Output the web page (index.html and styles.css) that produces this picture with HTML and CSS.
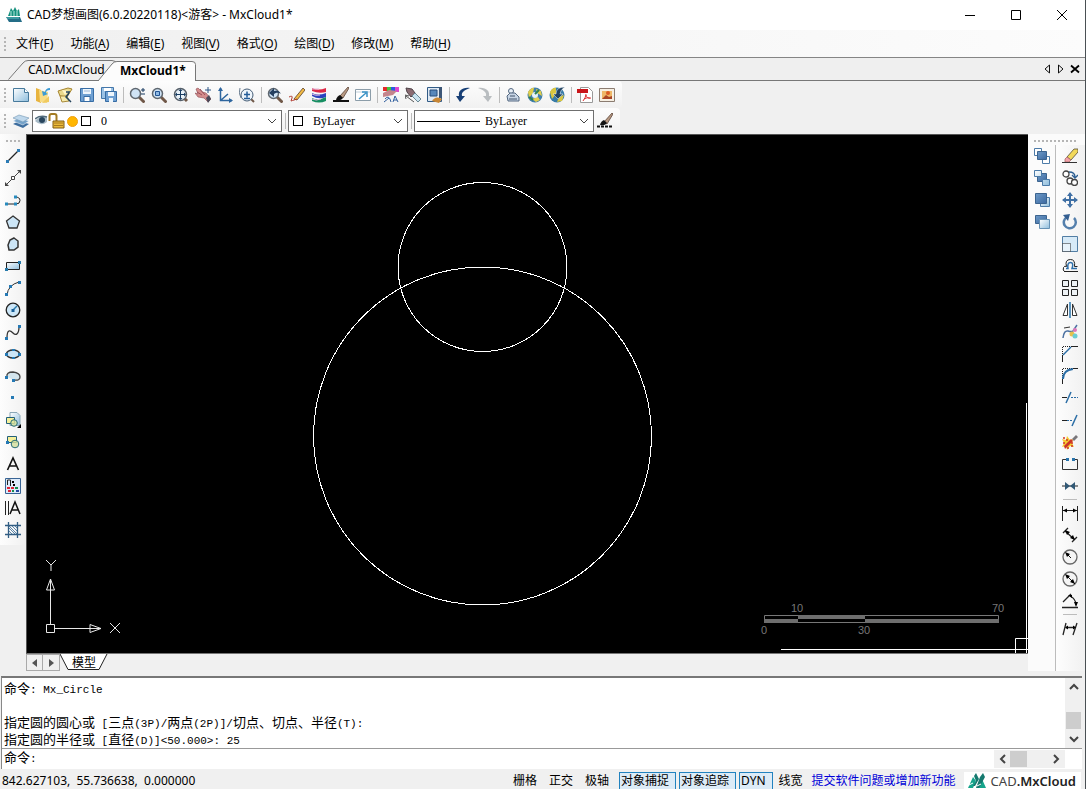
FILE: index.html
```html
<!DOCTYPE html>
<html lang="zh-CN">
<head>
<meta charset="utf-8">
<title>CAD梦想画图</title>
<link rel="stylesheet" href="styles.css">
</head>
<body>
<svg class="defs" aria-hidden="true">
<defs>
<linearGradient id="paper" x1="0" y1="0" x2="1" y2="1"><stop offset="0" stop-color="#fff"/><stop offset="1" stop-color="#8fbedd"/></linearGradient>
<linearGradient id="steel" x1="0" y1="0" x2="1" y2="1"><stop offset="0" stop-color="#6f9bc8"/><stop offset="1" stop-color="#3b68a0"/></linearGradient>
<symbol id="lens" viewBox="0 0 16 16"><path d="M10.5 10.5l4 4" stroke="#705848" stroke-width="3" stroke-linecap="round"/><circle cx="6.500" cy="6.500" r="5" fill="#cfe3f5" stroke="#5f676f" stroke-width="1.500"/></symbol>
<symbol id="logo" viewBox="0 0 18 15"><path d="M0 15L5 4l3 4-3 7zM9 15l5-9 4 9h-5z" fill="#16a58c"/><path d="M6 3l2-3 3 6-4 7H5l3-5zM12 4l3-4 2 4-6 11H8z" fill="#15796f"/><path d="M1 12l4-2M9 13l4-2" stroke="#fff"/></symbol>
</defs>
</svg>

<header class="titlebar">
  <svg class="app-icon" viewBox="0 0 16 16"><path d="M2 9L5 1l2 3 2-4 2 4 2-2 1 7z" fill="#16917e"/><path d="M5 4v5M8 4v5M11 4v5" stroke="#b5e8dc"/><path d="M0 10h14l2 5H3z" fill="#246d87"/><path d="M1 11h12" stroke="#56c9ba"/></svg>
  <h1>CAD梦想画图(6.0.20220118)&lt;游客&gt; - MxCloud1*</h1>
  <div class="window-buttons">
    <button aria-label="最小化"><svg viewBox="0 0 12 12"><path d="M1 6.500h10" stroke="#000" fill="none"/></svg></button>
    <button aria-label="最大化"><svg viewBox="0 0 12 12"><path d="M1.500 1.500h9v9h-9z" stroke="#000" fill="none"/></svg></button>
    <button aria-label="关闭"><svg viewBox="0 0 12 12"><path d="M1 1l10 10M11 1L1 11" stroke="#000" fill="none"/></svg></button>
  </div>
</header>

<nav class="menubar">
  <i class="grip"></i>
  <button>文件(<u>F</u>)</button><button>功能(<u>A</u>)</button><button>编辑(<u>E</u>)</button><button>视图(<u>V</u>)</button><button>格式(<u>O</u>)</button><button>绘图(<u>D</u>)</button><button>修改(<u>M</u>)</button><button>帮助(<u>H</u>)</button>
</nav>

<div class="tabs">
  <button class="tab"><svg class="tab-shape" viewBox="0 0 112 20"><path d="M.5 19.500L15 3q2-2.500 5-2.500h84q4 0 6 4V19.500" fill="#efefef" stroke="#777"/></svg><span>CAD.MxCloud</span></button>
  <button class="tab active"><svg class="tab-shape" viewBox="0 0 98 20"><path d="M0 20L14 3q2-2.500 5-2.500h75q3.500 0 3.500 3V20" fill="#fcfcfc" stroke="#777"/></svg><span>MxCloud1*</span></button>
  <div class="tab-nav">
    <button aria-label="上一个"><svg viewBox="0 0 10 10"><path d="M7.500 1v8L3 5z" fill="none" stroke="#111"/></svg></button>
    <button aria-label="下一个"><svg viewBox="0 0 10 10"><path d="M2.500 1v8L7 5z" fill="none" stroke="#111"/></svg></button>
    <button aria-label="关闭图纸"><svg viewBox="0 0 10 10"><path d="M1 1.500l8 7M9 1.500l-8 7" stroke="#000" stroke-width="1.800"/></svg></button>
  </div>
</div>

<div class="toolrows">
<div class="toolbar">
  <i class="grip"></i>
  <button aria-label="新建"><svg viewBox="0 0 16 16"><path d="M.5 1.500h11l4 4v9H.5z" fill="url(#paper)" stroke="#477a9c"/><path d="M11.500 1.500v4h4" fill="#fff" stroke="#477a9c"/></svg></button>
  <button aria-label="打开"><svg viewBox="0 0 16 16"><path d="M1 1l5 2v13l-5-2z" fill="#e8b43f"/><path d="M4 3l9 2-1 11-7-1z" fill="#f8dc84"/><path d="M7 16l7-7v6z" fill="#f0ca60"/><path d="M15 1c-3 0-5 2-5 4L7 4l1 5 5-2-2-1c0-2 1-3 4-3z" fill="#3c9bd5"/></svg></button>
  <button aria-label="打开网络图纸"><svg viewBox="0 0 16 16"><path d="M1 4l10-3 4 1-5 8-7-1z" fill="#ead98c" stroke="#a58430"/><path d="M3 9l2 6 7-1-2-5z" fill="#f6ebad" stroke="#a98a3a"/><path d="M5 3l7 1-4 4z" fill="#fff6c8"/><path d="M9 5h4M12 6l-3 4 5 5" stroke="#25445d" stroke-width="1.500" fill="none"/></svg></button>
  <button aria-label="保存"><svg viewBox="0 0 16 16"><path d="M1.500 1.500h13v13h-13z" fill="#6fa0d2" stroke="#376da5"/><path d="M4 2h8v5H4z" fill="#eef6fc"/><path d="M5 9.500h6v5H5z" fill="#fff" stroke="#376da5"/><path d="M5 4h6" stroke="#9ebada"/></svg></button>
  <button aria-label="另存为"><svg viewBox="0 0 16 16"><path d="M.5.5h12v11H.5z" fill="#9bc2e5" stroke="#4477aa"/><path d="M3 1h7v3H3z" fill="#fff"/><path d="M4.500 4.500h11v10h-11z" fill="#6fa0d2" stroke="#376da5"/><path d="M7 5h6v4H7zM8 11h4v4H8z" fill="#eef6fc"/></svg></button>
  <i class="sep"></i>
  <button aria-label="实时缩放"><svg viewBox="0 0 16 16"><use href="#lens"/><path d="M12 3h4M14 1v4M12 7h4" stroke="#17395e"/></svg></button>
  <button aria-label="窗口缩放"><svg viewBox="0 0 16 16"><use href="#lens"/><path d="M4.500 4.500h4v4h-4z" fill="#8eb8e2" stroke="#205495"/></svg></button>
  <button aria-label="全部缩放"><svg viewBox="0 0 16 16"><path d="M11 11l3 3" stroke="#705848" stroke-width="3"/><circle cx="7.500" cy="7.500" r="6" fill="#e8f1f8" stroke="#56606a" stroke-width="1.500"/><path d="M3 7.500h9M7.500 3v9" stroke="#183d63"/><path d="M7.500 2l2 2h-4zM7.500 13l2-2h-4zM2 7.500l2-2v4zM13 7.500l-2-2v4z" fill="#183d63"/></svg></button>
  <button aria-label="平移"><svg viewBox="0 0 16 16"><path d="M1 2l2-1 4 4 4 1 5 6-3 3-4-4-6-1-3-4 3 1z" fill="#d48c8c" stroke="#8b4a50" stroke-width=".6"/><path d="M2 5l5 3M5 2l5 6" stroke="#9a4e58"/><path d="M11 11l3-3 2 4-3 4z" fill="#4a4858"/><path d="M10 3h6M13 0v6" stroke="#2c5586"/></svg></button>
  <button aria-label="坐标系"><svg viewBox="0 0 16 16"><path d="M3.500 1v12.500H15M3.500 13.500L11 7" fill="none" stroke="#2d659e" stroke-width="1.500"/><path d="M3.500 0L1 4h5zM16 13.500l-4-2.500v5z" fill="#2d659e"/></svg></button>
  <button aria-label="范围缩放"><svg viewBox="0 0 16 16"><path d="M1 1q-2 5 1 10" stroke="#6d7f92" fill="none"/><path d="M12 12l3 3" stroke="#705848" stroke-width="2"/><circle cx="8" cy="8" r="6" fill="#eef5fb" stroke="#455d76"/><path d="M5 7.500h6M8 4.500v6M5 11.500h6" stroke="#245d99" stroke-width="1.500"/></svg></button>
  <i class="sep"></i>
  <button aria-label="上一视图"><svg viewBox="0 0 16 16"><use href="#lens"/><path d="M2 6l5-5v3c3-1 6 0 7 3-3-2-5-1-7 0v3z" fill="#243f60"/></svg></button>
  <button aria-label="铅笔"><svg viewBox="0 0 16 16"><path d="M5 12L14 1l2 2L8 13z" fill="#f1ba45" stroke="#59402a" stroke-width=".8"/><path d="M0 10q4-2 3 1t-1 3 6-2" stroke="#b0392e" fill="none"/></svg></button>
  <button aria-label="图层颜色"><svg viewBox="0 0 16 16"><path d="M1 1q6 3 14 0v4q-7 2-14-1z" fill="#dd2745"/><path d="M1 6q6 3 14 0v4q-7 3-14-1z" fill="#2a42be"/><path d="M1 11q6 3 14-1v4q-7 3-14 0z" fill="#168f62"/><path d="M1 2h7M1 7q3 2 8 1M1 12q4 2 9 0" stroke="#e5b9dc" fill="none"/></svg></button>
  <button aria-label="画笔"><svg viewBox="0 0 16 16"><path d="M7 9l8-9 1 1-6 10z" fill="#b89982" stroke="#5b4438" stroke-width=".8"/><path d="M3 13q1-4 4-5l3 3q-2 3-7 2z" fill="#111"/><path d="M0 14h16" stroke="#111" stroke-width="2"/></svg></button>
  <button aria-label="链接"><svg viewBox="0 0 16 16"><path d="M.5 2.500h15v11H.5z" fill="#fff" stroke="#8c9da9"/><path d="M1 5h14" stroke="#c2d1dc"/><path d="M4 12l7-6M7 5h5v5" stroke="#3b93c6" stroke-width="1.500" fill="none"/></svg></button>
  <i class="sep"></i>
  <button aria-label="特性"><svg viewBox="0 0 16 16"><path d="M0 0h4v4H0z" fill="#e32929"/><path d="M4 0h4v4H4z" fill="#42c53c"/><path d="M8 0h4v4H8z" fill="#2a5be0"/><path d="M12 0h4v5h-4z" fill="#dd47cd"/><path d="M0 6l6-3 8 1-4 4-10 2z" fill="#c4858c"/><path d="M10 15l2-6 3 6M11 13h3M1 15l5-4M2 12q4-5 6 3" stroke="#315f9e" fill="none"/></svg></button>
  <button aria-label="特性匹配"><svg viewBox="0 0 16 16"><path d="M1 1l6 1 3 4-4 4-4-5z" fill="#8a6b72" stroke="#4e4248"/><path d="M7 9l3-3 6 6-3 3z" fill="#c9e2ef" stroke="#698793"/><path d="M1 9l8 6M0 8l1 4M0 8l4 1" stroke="#555"/></svg></button>
  <button aria-label="图块编辑"><svg viewBox="0 0 16 16"><path d="M.5.5h14v14H.5z" fill="#dfe9f3" stroke="#315b86"/><path d="M3 3h7v6H3z" fill="#5687bb" stroke="#244c7c"/><path d="M12 0h3v11h-3z" fill="#3c5676"/><path d="M5 14q3-5 8-3l2 1-3 4z" fill="#c88736"/></svg></button>
  <i class="sep"></i>
  <button aria-label="撤销"><svg viewBox="0 0 16 16"><path d="M15 1C7 0 3 4 4 9H1l4 6 5-6H7c-1-4 3-6 8-8z" fill="#173f76"/></svg></button>
  <button aria-label="重做"><svg viewBox="0 0 16 16"><path d="M1 1c8-1 12 3 11 8h3l-4 6-5-6h3c1-4-3-6-8-8z" fill="#b9bdc0"/></svg></button>
  <i class="sep"></i>
  <button aria-label="打印"><svg viewBox="0 0 16 16"><circle cx="6" cy="4" r="2.500" fill="#e9f0f8" stroke="#536780"/><path d="M2 9l3-3h5l4 4v4H3z" fill="#c8d5e5" stroke="#536780"/><path d="M4 12h8M5 9h5" stroke="#40536b"/></svg></button>
  <button aria-label="网络"><svg viewBox="0 0 16 16"><circle cx="8" cy="8" r="7.500" fill="#417fac"/><path d="M1 5q4-5 6-4l-1 5-4 5zM9 2l5 2 1 5-5-3zM5 12l6-2 2 3-4 2z" fill="#e2ce4b"/><circle cx="8" cy="8" r="3" fill="#e6f2f8"/><path d="M2 10l4 3M12 3l-4 4" stroke="#2e8050" stroke-width="2"/></svg></button>
  <button aria-label="同步"><svg viewBox="0 0 16 16"><circle cx="8" cy="8" r="7.500" fill="#387ba7"/><path d="M1 5q3-5 6-4v6l-4 5zM10 10l5-2-2 6-5 1z" fill="#dac63e"/><path d="M16 0q-9 0-9 7H4l5 5 5-5h-3q0-4 5-7z" fill="#234362" stroke="#f4f8fb" stroke-width=".5"/></svg></button>
  <i class="sep"></i>
  <button aria-label="输出PDF"><svg viewBox="0 0 16 16"><path d="M3.500.500h8l4 4v11h-12z" fill="#fff" stroke="#999"/><path d="M0 2h11v4H0z" fill="#c91519"/><path d="M6 14q3-4 3-7M9 8q1 4 5 3M7 12q3-2 6-1" fill="none" stroke="#d33"/></svg></button>
  <button aria-label="输出图片"><svg viewBox="0 0 16 16"><path d="M.5 1.500h15v13H.5z" fill="#f6efe3" stroke="#8b7c71"/><path d="M3 4h10v8H3z" fill="#efb767"/><path d="M3 12l4-4 3 2 3-1v3z" fill="#a94424"/><circle cx="9" cy="6" r="2" fill="#d95a25"/></svg></button>
</div>
<div class="toolbar second">
  <i class="grip"></i>
  <button aria-label="图层管理"><svg viewBox="0 0 16 16"><path d="M0 11l6-3 10 3-6 4z" fill="#3d6d9e"/><path d="M0 8l6-3 10 3-6 4z" fill="#75a3ca" stroke="#fff" stroke-width=".5"/><path d="M0 5l6-3 10 3-6 4z" fill="#bfd8ec" stroke="#7195b4" stroke-width=".6"/></svg></button>
  <div class="combo layer">
    <svg class="wide" viewBox="0 0 44 16"><path d="M0 8q5-6 12-4v5q-6 5-12-1z" fill="#a8bbc7"/><circle cx="7" cy="7" r="3" fill="#29465e"/><path d="M0 6q5-4 12-2" stroke="#526b7c" fill="none" stroke-width="1.500"/><path d="M14.500 8V3q0-2 2-2h3q2 0 2 2v5" fill="none" stroke="#a37b23" stroke-width="2"/><path d="M18 8h11v7H18z" fill="#e9ba3b" stroke="#815c12"/><path d="M19 10h9M19 12.500h9" stroke="#a77920"/><circle cx="37.500" cy="8.500" r="5" fill="#ffb600" stroke="#f0a010"/></svg>
    <i class="swatch"></i>
    <select aria-label="图层"><option>0</option></select>
    <svg class="chev" viewBox="0 0 10 6"><path d="M1 1l4 4 4-4" fill="none" stroke="#444"/></svg>
  </div>
  <i class="sep"></i>
  <div class="combo color">
    <i class="swatch"></i>
    <select aria-label="颜色"><option>ByLayer</option></select>
    <svg class="chev" viewBox="0 0 10 6"><path d="M1 1l4 4 4-4" fill="none" stroke="#444"/></svg>
  </div>
  <i class="sep"></i>
  <div class="combo linetype">
    <i class="linesample"></i>
    <select aria-label="线型"><option>ByLayer</option></select>
    <svg class="chev" viewBox="0 0 10 6"><path d="M1 1l4 4 4-4" fill="none" stroke="#444"/></svg>
  </div>
  <button aria-label="线型管理"><svg viewBox="0 0 16 16"><path d="M7 9l8-9 1 1-6 10z" fill="#b89982" stroke="#5b4438" stroke-width=".8"/><path d="M3 12q1-4 4-5l3 3q-2 3-7 2z" fill="#111"/><path d="M0 13.500h16" stroke="#111" stroke-width="2" stroke-dasharray="3 1"/></svg></button>
</div>
</div>

<main class="work">
<div class="side-left">
<div class="toolbar vertical draw">
  <i class="grip"></i>
  <button aria-label="直线"><svg viewBox="0 0 16 16"><path d="M2 14L14 2" stroke="#222" stroke-width="1.300"/><path d="M1 12h3v3H1zM12 1h3v3h-3z" fill="#2a7bb5"/></svg></button>
  <button aria-label="构造线"><svg viewBox="0 0 16 16"><path d="M1 15L15 1" stroke="#444"/><path d="M0 12v4h4zM12 0h4v4z" fill="#444"/><path d="M6.500 6.500h3v3h-3z" fill="#fff" stroke="#444"/></svg></button>
  <button aria-label="多段线"><svg viewBox="0 0 16 16"><path d="M1 12h10M10 5q5 0 5 3.500T11 12" fill="none" stroke="#222"/><path d="M0 10.500h3v3H0zM9 10.500h3v3H9zM9 3.500h3v3H9z" fill="#278abd"/></svg></button>
  <button aria-label="正多边形"><svg viewBox="0 0 16 16"><path d="M8 2l6.500 5-2.500 7H4L1.500 7z" fill="#cce5f6" stroke="#333" stroke-width="1.300"/></svg></button>
  <button aria-label="多边形"><svg viewBox="0 0 16 16"><path d="M9 2l4 3v6l-4 3H4L3 9l2-5z" fill="#cce5f6" stroke="#333" stroke-width="1.500"/></svg></button>
  <button aria-label="矩形"><svg viewBox="0 0 16 16"><path d="M1.500 4.500h13v7h-13z" fill="url(#paper)" stroke="#222"/><path d="M0 10h3v3H0zM13 3h3v3h-3z" fill="#287bac"/></svg></button>
  <button aria-label="圆弧"><svg viewBox="0 0 16 16"><path d="M2 15Q3 5 14 2" fill="none" stroke="#333"/><path d="M0 13h3v3H0zM4 5h3v3H4zM13 1h3v3h-3z" fill="#2579b4"/></svg></button>
  <button aria-label="圆"><svg viewBox="0 0 16 16"><circle cx="8" cy="8" r="6.800" fill="#cce6f7" stroke="#222" stroke-width="1.300"/><path d="M8 8l4-4" stroke="#287bac" stroke-width="1.500"/><path d="M6.500 7h3v3h-3z" fill="#175f99"/></svg></button>
  <button aria-label="样条曲线"><svg viewBox="0 0 16 16"><path d="M2 14C2 5 5 6 8 9s6 1 6-6" fill="none" stroke="#333" stroke-width="1.300"/><path d="M0 13h3v3H0zM13 1h3v3h-3z" fill="#2579b4"/></svg></button>
  <button aria-label="椭圆"><svg viewBox="0 0 16 16"><ellipse cx="8" cy="8" rx="6.500" ry="4" fill="#cce6f7" stroke="#333" stroke-width="1.500"/><path d="M0 7h3v3H0zM13 7h3v3h-3zM7 3h3v2H7zM7 11h3v2H7z" fill="#2579b4"/></svg></button>
  <button aria-label="椭圆弧"><svg viewBox="0 0 16 16"><path d="M2 9q-1-5 6-5 7 1 7 5t-6 3" fill="#d4e5ed" stroke="#444" stroke-width="1.300"/><path d="M0 8h3v3H0zM7 11h3v3H7z" fill="#2579b4"/></svg></button>
  <button aria-label="点"><svg viewBox="0 0 16 16"><path d="M6 6h3v3H6z" fill="#2579b4"/></svg></button>
  <button aria-label="插入块"><svg viewBox="0 0 16 16"><path d="M5 .5h7l3 3v10H5z" fill="url(#paper)" stroke="#8aa7b6"/><path d="M1.500 5.500h8v6h-8z" fill="#f6f09a" stroke="#236079"/><circle cx="9" cy="11" r="3.300" fill="#dbe59d" fill-opacity=".8" stroke="#286d78"/><path d="M12 16h4v-4z"/></svg></button>
  <button aria-label="创建块"><svg viewBox="0 0 16 16"><path d="M2.500 2.500h9v6h-9z" fill="#f6f09a" stroke="#236079"/><circle cx="10" cy="10" r="3.800" fill="#d5e09c" fill-opacity=".8" stroke="#286d78"/><path d="M1 7h3v3H1z" fill="#2579b4"/></svg></button>
  <button aria-label="文字"><svg viewBox="0 0 16 16"><path d="M2.500 14L8 2l5.500 12M4.500 10h7" fill="none" stroke="#111" stroke-width="1.600"/></svg></button>
  <button aria-label="填充"><svg viewBox="0 0 16 16"><path d="M.5.5h15v15H.5z" fill="#deebfa" stroke="#386495"/><path d="M2.500 7V2h3v6" fill="none" stroke="#222"/><path d="M7 3h2v2H7zM8 6h2v2H8z"/><path d="M2 9h3v2H2zM6 9h3v2H6zM3 12h3v2H3z" fill="#dd2438"/><path d="M10 9h3v2h-3zM7 12h2v2H7z" fill="#138d4e"/><path d="M11 12h3v2h-3z" fill="#24469e"/></svg></button>
  <button aria-label="单行文字"><svg viewBox="0 0 16 16"><path d="M.5 1v14M3.500 1v14" stroke="#222"/><path d="M5 14l5-12 5 12M7 10h6" fill="none" stroke="#111" stroke-width="1.500"/></svg></button>
  <button aria-label="图案填充"><svg viewBox="0 0 16 16"><path d="M3.500 0v16M12.500 0v16M0 3.500h16M0 12.500h16" stroke="#315d83" stroke-width="1.300"/><path d="M4 9l3 3M4 6l6 6M4 4l8 8M7 4l5 5M10 4l2 2" stroke="#386b96" stroke-width=".8"/></svg></button>
</div>
</div>

<section class="center">
  <div class="canvas">
    <svg class="drawing"><g fill="none" stroke="#fff" shape-rendering="crispEdges"><circle cx="455.500" cy="132" r="84.500"/><circle cx="455.500" cy="301" r="169"/></g></svg>
    <svg class="ucs" viewBox="0 0 80 80"><g fill="none" stroke="#e8e8e8"><path d="M5.500 68.500h8v8h-8zM9.500 68V32M14 72.500h35"/><path d="M9.500 23l-4 11h8zM9.500 23v11M60 72.500l-11-4v8zM60 72.500H49"/><path d="M5 4l5 5 5-5M10 9v6M69 67l10 10M79 67l-10 10"/></g></svg>
    <svg class="scale" viewBox="0 0 250 36"><g fill="none" stroke="#777"><path d="M7.500 12.500h234v7h-234z"/></g><path d="M7 16h34v4H7zM41 12h67v4H41zM108 16h134v4H108z" fill="#6e6e6e"/><g class="scale-text"><text x="40" y="9">10</text><text x="241" y="9">70</text><text x="7" y="31">0</text><text x="107" y="31">30</text></g></svg>
    <svg class="cursor" viewBox="0 0 248 250"><g fill="none" stroke="#fff"><path d="M246.500 0v250M1 246.500h247M235.500 250v-14.500h12.500"/></g></svg>
  </div>
  <div class="model-tabs">
    <button class="arrow" aria-label="左移"><svg viewBox="0 0 10 10"><path d="M7 1v8L2 5z" fill="#555"/></svg></button>
    <button class="arrow" aria-label="右移"><svg viewBox="0 0 10 10"><path d="M3 1v8l5-4z" fill="#555"/></svg></button>
    <button class="model"><svg viewBox="0 0 48 16"><path d="M0 0l8 15.500h31L47 0z" fill="#fff"/><path d="M0 0l8 15.500h31L47 0" fill="none" stroke="#222"/></svg><span>模型</span></button>
  </div>
</section>

<aside class="side-right">
<i class="grip"></i>
<div class="side-cols">
<div class="toolbar vertical order">
  <button aria-label="前置"><svg viewBox="0 0 16 16"><path d="M.5.5h7v7h-7z" fill="#fff" stroke="#4c7ba8"/><path d="M8.500 8.500h7v7h-7z" fill="#fff" stroke="#4c7ba8"/><path d="M3.500 3.500h9v8h-9z" fill="url(#steel)" stroke="#3c648f"/></svg></button>
  <button aria-label="后置"><svg viewBox="0 0 16 16"><path d="M3.500 3.500h9v8h-9z" fill="url(#steel)" stroke="#3c648f"/><path d="M.5.5h7v6h-7zM8.500 9.500h7v6h-7z" fill="url(#paper)" stroke="#4c7ba8"/></svg></button>
  <button aria-label="置于对象之上"><svg viewBox="0 0 16 16"><path d="M6.500 5.500h9v9h-9z" fill="url(#paper)" stroke="#4c7ba8"/><path d="M1.500 1.500h11v10h-11z" fill="url(#steel)" stroke="#3c648f"/></svg></button>
  <button aria-label="置于对象之下"><svg viewBox="0 0 16 16"><path d="M1.500 1.500h11v8h-11z" fill="url(#steel)" stroke="#3c648f"/><path d="M5.500 5.500h10v9h-10z" fill="url(#paper)" stroke="#6792b5"/></svg></button>
</div>
<div class="toolbar vertical modify">
  <button aria-label="删除"><svg viewBox="0 0 16 16"><path d="M5 9l7-8h4v3l-7 8z" fill="#f2d95b" stroke="#544b35" stroke-width=".8"/><path d="M3 11l2-2 4 3-2 2H3z" fill="#f3a2aa" stroke="#a96b69" stroke-width=".8"/><path d="M0 14.500h15" stroke="#333"/></svg></button>
  <button aria-label="复制"><svg viewBox="0 0 16 16"><g fill="#fff" stroke="#444" stroke-width="1.300"><circle cx="4" cy="4" r="3"/><circle cx="8" cy="11" r="3"/><circle cx="12.500" cy="12.500" r="3"/></g><path d="M7 2q6 0 6 5M10 5l3 3 3-3" fill="none" stroke="#2d5f92" stroke-width="1.300"/></svg></button>
  <button aria-label="移动"><svg viewBox="0 0 16 16"><path d="M8 1v14M1 8h14" stroke="#3f6fa4" stroke-width="2"/><path d="M8 0l3 4H5zM8 16l3-4H5zM0 8l4-3v6zM16 8l-4-3v6z" fill="#3f6fa4"/></svg></button>
  <button aria-label="旋转"><svg viewBox="0 0 16 16"><path d="M5 3a6 6 0 1 0 7 1" fill="none" stroke="#547fac" stroke-width="2.500"/><path d="M1 1l7-1-2 7z" fill="#345f91"/></svg></button>
  <button aria-label="缩放"><svg viewBox="0 0 16 16"><path d="M.5.5h15v15H.5z" fill="#d7eaf7" stroke="#527ea4"/><path d="M.5 7.500h8v8h-8z" fill="#e8f3fb" stroke="#222" stroke-dasharray="1 1"/></svg></button>
  <button aria-label="偏移"><svg viewBox="0 0 16 16"><g fill="none"><path d="M2.500 13.500q-2-1-1-4 1-2 3-1-2-7 4-7 5 0 4 7h3" stroke="#222"/><path d="M15 10.500h-5q2-6-1.500-6T6 10.500H4" stroke="#2e70ab" stroke-width="1.500"/><path d="M2 13.500h14" stroke="#222"/></g></svg></button>
  <button aria-label="阵列"><svg viewBox="0 0 16 16"><path d="M.5.5h6v6h-6zM9.500.5h6v6h-6zM.5 9.500h6v6h-6zM9.500 9.500h6v6h-6z" fill="#eef2f5" stroke="#222"/></svg></button>
  <button aria-label="镜像"><svg viewBox="0 0 16 16"><path d="M5.500 2v11.500H1zM10.500 2v11.500H15z" fill="#fff" stroke="#333"/><path d="M8 0v16" stroke="#2974ac" stroke-width="1.500"/></svg></button>
  <button aria-label="编辑多段线"><svg viewBox="0 0 16 16"><path d="M1 14q1-8 5-7t5 0l4-6" fill="none" stroke="#4d72a2" stroke-width="1.500"/><path d="M2 4l6-1" stroke="#333"/><circle cx="13" cy="6" r="2" fill="#df78bb"/><circle cx="10" cy="10" r="2.500" fill="#e7c04c"/><circle cx="13" cy="12" r="2.500" fill="#6acdd2"/></svg></button>
  <button aria-label="倒角"><svg viewBox="0 0 16 16"><path d="M.5 16V9M9 .5h7" stroke="#222"/><path d="M.5 8V.5H9" fill="none" stroke="#222" stroke-dasharray="1 1"/><path d="M1 9l8-8" stroke="#2a6da5" stroke-width="1.500"/></svg></button>
  <button aria-label="圆角"><svg viewBox="0 0 16 16"><path d="M.5 16v-5M11 .5h5" stroke="#222"/><path d="M.5 10V.5H11" fill="none" stroke="#222" stroke-dasharray="1 1"/><path d="M1 11q0-9 10-10" stroke="#2a6da5" stroke-width="2" fill="none"/></svg></button>
  <button aria-label="修剪"><svg viewBox="0 0 16 16"><path d="M0 7.500h5" stroke="#222"/><path d="M9 7.500h7" stroke="#2a6da5" stroke-dasharray="2 1"/><path d="M4 13l5-11" stroke="#2a6da5" stroke-width="1.500"/></svg></button>
  <button aria-label="延伸"><svg viewBox="0 0 16 16"><path d="M0 8.500h5" stroke="#222"/><path d="M5 8.500h6" stroke="#2a6da5" stroke-dasharray="2 1"/><path d="M10 14l5-11" stroke="#2a6da5" stroke-width="1.500"/></svg></button>
  <button aria-label="分解"><svg viewBox="0 0 16 16"><path d="M0 5l4 1 1-4 3 4 3-1-1 4 2 4-4-1-3 4-1-4-4 1 2-4z" fill="#f5cb31"/><path d="M3 15l-1-3 7-7 2 2z" fill="#cb3528"/><path d="M10 5l4-4 2 2-4 4z" fill="#79767b"/><path d="M1 4h2M4 6h2M9 9h2M9 12h2M1 9h2M5 14h2" stroke="#d13423" stroke-width="1.500"/></svg></button>
  <button aria-label="打断"><svg viewBox="0 0 16 16"><path d="M4 3.500H.5v10h15v-10H12" fill="none" stroke="#333"/><path d="M4 2h3v3H4zM10 2h3v3h-3z" fill="#2974ac"/></svg></button>
  <button aria-label="合并"><svg viewBox="0 0 16 16"><path d="M0 8h16" stroke="#222"/><path d="M3 4l5 4-5 4zM13 4L8 8l5 4z" fill="#315875"/></svg></button>
  <i class="sep"></i>
  <button aria-label="线性标注"><svg viewBox="0 0 16 16"><path d="M.5 1v15M15.500 1v15M1 5.500h14" stroke="#222"/><path d="M1 5.500l4-2v4zM15 5.500l-4-2v4z"/></svg></button>
  <button aria-label="对齐标注"><svg viewBox="0 0 16 16"><path d="M1 6l5-5M10 15l5-5M3 4l10 9" stroke="#222" stroke-width="1.300"/><path d="M3 3l5 2-3 3zM13 13l-5-2 3-3z"/></svg></button>
  <button aria-label="半径标注"><svg viewBox="0 0 16 16"><circle cx="8" cy="8" r="7" fill="#f4f4f4" stroke="#666" stroke-width="1.300"/><path d="M4 4l5 5" stroke="#111"/><path d="M3 3l5 2-3 3z"/></svg></button>
  <button aria-label="直径标注"><svg viewBox="0 0 16 16"><circle cx="8" cy="8" r="7" fill="#f4f4f4" stroke="#666" stroke-width="1.300"/><path d="M4 4l9 9" stroke="#111"/><path d="M3 3l5 2-3 3zM13 13l-5-2 3-3z"/></svg></button>
  <button aria-label="角度标注"><svg viewBox="0 0 16 16"><path d="M0 14.500h16M1 9l8-8M8 3q6 3 6 9" fill="none" stroke="#222" stroke-width="1.300"/><path d="M6 2h4v3zM12 9h4l-2 5z"/></svg></button>
  <i class="sep"></i>
  <button aria-label="编辑标注"><svg viewBox="0 0 16 16"><path d="M1 15L4 3M11 15l4-12M4 7.500h9" stroke="#222" stroke-width="1.300"/><path d="M3 7.500l3-2v4zM14 7.500l-3-2v4z"/></svg></button>
</div>
</div>
</aside>
</main>

<section class="command">
  <div class="history">
    <div class="log">
      <p>命令<code>: Mx_Circle</code></p>
      <p>&nbsp;</p>
      <p>指定圆的圆心或<code> [</code>三点<code>(3P)/</code>两点<code>(2P)]/</code>切点、切点、半径<code>(T):</code></p>
      <p>指定圆的半径或<code> [</code>直径<code>(D)]&lt;50.000&gt;: 25</code></p>
    </div>
    <div class="vscroll">
      <svg viewBox="0 0 10 8"><path d="M1 6l4-4 4 4" fill="none" stroke="#444" stroke-width="2"/></svg>
      <i class="vthumb"></i>
      <svg viewBox="0 0 10 8"><path d="M1 2l4 4 4-4" fill="none" stroke="#444" stroke-width="2"/></svg>
    </div>
  </div>
  <div class="prompt">
    <label for="cmd">命令<code>:</code></label>
    <input id="cmd" type="text">
    <div class="hscroll">
      <svg viewBox="0 0 8 10"><path d="M6 1L2 5l4 4" fill="none" stroke="#444" stroke-width="2"/></svg>
      <i class="hthumb"></i>
      <svg class="end" viewBox="0 0 8 10"><path d="M2 1l4 4-4 4" fill="none" stroke="#444" stroke-width="2"/></svg>
    </div>
  </div>
</section>

<footer class="status">
  <output>842.627103,&nbsp; 55.736638,&nbsp; 0.000000</output>
  <div class="modes">
    <button>栅格</button><button>正交</button><button>极轴</button><button class="on">对象捕捉</button><button class="on">对象追踪</button><button class="on">DYN</button><button>线宽</button>
  </div>
  <a href="#">提交软件问题或增加新功能</a>
  <div class="brand"><svg viewBox="0 0 18 15"><use href="#logo"/></svg><span>CAD<b>.MxCloud</b></span></div>
</footer>
</body>
</html>
```
FILE: styles.css
```css
* { box-sizing: border-box; }
body {
  margin: 0;
  min-height: 100vh;
  display: flex;
  flex-direction: column;
  background: #f0f0f0;
  border-right: 1px solid #4a5054;
  color: #000;
  font: 12px/16px "Noto Sans", "Noto Sans CJK SC", sans-serif;
}
.defs { position: absolute; width: 0; height: 0; }
button {
  appearance: none;
  border: 0;
  padding: 0;
  margin: 0;
  background: none;
  color: inherit;
  font: inherit;
  white-space: nowrap;
}
svg { display: block; flex: none; }

.titlebar { display: flex; align-items: center; height: 30px; background: #fff; padding-left: 6px; }
.app-icon { width: 16px; height: 16px; }
.titlebar h1 { flex: 1; margin: 0 0 0 5px; font-size: 12px; font-weight: 400; }
.window-buttons { display: flex; }
.window-buttons button { width: 46px; height: 30px; display: grid; place-items: center; }
.window-buttons svg { width: 12px; height: 12px; }

.grip {
  flex: none;
  width: 2px;
  height: 14px;
  margin: 0 4px;
  background: repeating-linear-gradient(#b5b5b5 0 2px, transparent 2px 4px);
}
.menubar {
  display: flex;
  align-items: center;
  height: 28px;
  background: linear-gradient(90deg, #f0f0f0, #fcfcfc);
  border-bottom: 1px solid #858585;
}
.menubar button { margin-left: 6px; margin-right: 11px; }
.menubar u { text-underline-offset: 2px; }

.tabs {
  display: flex;
  align-items: flex-end;
  height: 23px;
  padding-left: 8px;
  background: #efefef;
  border-bottom: 1px solid #777;
}
.tab { position: relative; width: 112px; height: 20px; padding-left: 20px; text-align: left; }
.tab span { position: relative; }
.tab-shape { position: absolute; left: 0; top: 0; width: 100%; height: 20px; }
.tab.active { width: 98px; height: 20px; margin: 0 0 -1px -22px; padding-left: 22px; font-weight: 700; }
.tab-nav { margin-left: auto; display: flex; gap: 4px; padding: 0 5px 6px 0; }
.tab-nav svg { width: 10px; height: 10px; }

.toolrows { background: #f0f0f0; }
.toolbar { display: flex; align-items: center; width: max-content; background: linear-gradient(#fdfdfd, #f1f1f1); border-radius: 0 4px 4px 0; height: 27px; }
.toolbar.second { height: 26px; }
.toolbar button { width: 22px; height: 22px; display: grid; place-items: center; }
.toolbar button svg { width: 16px; height: 16px; }
.sep { flex: none; width: 6px; height: 16px; background: linear-gradient(#bcbcbc, #bcbcbc) center / 1px 100% no-repeat; }
.toolrows .toolbar { padding-right: 4px; }
.combo { display: flex; align-items: center; height: 22px; padding: 0 4px; border: 1px solid #6f6f6f; background: #fff; }
.combo select {
  flex: 1;
  min-width: 0;
  appearance: none;
  border: 0;
  padding: 0;
  background: none;
  color: #000;
  font: 12px/16px "Liberation Serif", serif;
}
.combo .chev { width: 10px; height: 6px; }
.combo .wide { width: 44px; height: 16px; }
.swatch { width: 10px; height: 10px; border: 1px solid #000; margin: 0 10px 0 0; background: #fff; }
.layer { width: 250px; padding-left: 2px; }
.layer .swatch { margin-left: 2px; }
.color { width: 120px; }
.linetype { width: 180px; padding-left: 2px; }
.linesample { width: 63px; height: 1px; margin-right: 5px; background: #000; }

.work { flex: 1; display: flex; min-height: 0; }
.toolbar.vertical { flex-direction: column; height: auto; background: linear-gradient(90deg, #fdfdfd, #f1f1f1); }
.side-left { width: 26px; }
.draw { width: 25px; padding-bottom: 4px; }
.draw .grip, .side-right .grip {
  width: 14px;
  height: 2px;
  margin: 6px 0 3px;
  background: repeating-linear-gradient(90deg, #b5b5b5 0 2px, transparent 2px 4px);
}
.center { flex: 1; display: flex; flex-direction: column; }
.canvas { position: relative; flex: 1; min-height: 400px; overflow: hidden; background: #000; border: 1px solid #555; border-right: 0; border-bottom-color: #777; }
.drawing { position: absolute; inset: 0; width: 100%; height: 100%; }
.ucs { position: absolute; left: 14px; bottom: 17px; width: 80px; height: 80px; }
.scale { position: absolute; right: 21px; bottom: 14px; width: 250px; height: 36px; }
.scale-text { fill: #777; font: 11px "Liberation Sans", sans-serif; text-anchor: middle; }
.cursor { position: absolute; right: 0; bottom: 0; width: 248px; height: 250px; }
.model-tabs { display: flex; height: 17px; }
.arrow { width: 17px; height: 17px; display: grid; place-items: center; border: 1px solid #aaa; border-left-width: 0; }
.arrow:first-child { border-left-width: 1px; }
.arrow svg { width: 10px; height: 10px; }
.model { position: relative; width: 48px; padding: 0; }
.model svg { position: absolute; left: 0; top: 0; width: 48px; height: 16px; }
.model span { position: relative; }

.side-right { width: 57px; padding-left: 6px; background: #fbfbfb; display: flex; flex-direction: column; }
.side-right .grip { width: 44px; }
.side-cols { flex: 1; display: flex; }
.toolbar.order { width: 22px; margin-left: -3px; margin-right: 2px; background: none; }
.toolbar.order, .toolbar.modify { justify-content: flex-start; }
.toolbar.modify { flex: 1; align-items: flex-start; padding-left: 3px; border-left: 1px solid #bcbcbc; border-radius: 0; }
.vertical .sep { width: 14px; height: 5px; margin-left: 4px; background: linear-gradient(#bcbcbc, #bcbcbc) center / 100% 1px no-repeat; }

.command { margin: 5px 3px 0 1px; border-top: 2px solid #777; border-left: 1px solid #888; background: #fff; font: 13px/17px "Noto Sans CJK SC", sans-serif; }
.command code { font: 11px/15px "Liberation Mono", monospace; white-space: pre; }
.history { display: flex; border-bottom: 1px solid #999; }
.log { flex: 1; padding: 1px 0 1px 2px; }
.log p { margin: 0; height: 17px; }
.vscroll { width: 17px; padding: 5px 0; background: #f0f0f0; display: flex; flex-direction: column; align-items: center; }
.vscroll svg { width: 10px; height: 8px; }
.vthumb { width: 15px; height: 17px; margin: auto 0 6px; background: #cdcdcd; }
.prompt { display: flex; height: 20px; padding-left: 2px; line-height: 15px; }
.prompt input { flex: 1; min-width: 0; border: 0; padding: 0 4px; background: none; outline: 0; font: inherit; }
.hscroll { width: 71px; height: 18px; margin: 1px 17px 0 0; padding: 0 5px; background: #f0f0f0; display: flex; align-items: center; }
.hscroll svg { width: 8px; height: 10px; }
.hthumb { width: 17px; height: 16px; margin-left: 3px; background: #cdcdcd; }
.hscroll .end { margin-left: auto; }

.status { display: flex; align-items: center; height: 20px; padding: 3px 4px 0 2px; }
.status output { flex: 1; white-space: nowrap; }
.modes { display: flex; gap: 3px; }
.modes button { height: 18px; padding: 0 1px; border: 1px solid transparent; margin-right: 5px; }
.modes .on { margin-right: 0; padding-right: 6px; background: #dcebf7; border-color: #2182bf; }
.modes .on + button:not(.on) { margin-left: 1px; }
.status a { color: #0000d8; text-decoration: none; margin: 0 8px 0 2px; white-space: nowrap; }
.brand { display: flex; align-items: center; gap: 5px; padding: 0 5px 0 4px; height: 18px; background: #fff; font-size: 13px; }
.brand svg { width: 18px; height: 15px; }
.brand span { color: #444; }
.brand b { font-weight: 600; color: #222; }
```
